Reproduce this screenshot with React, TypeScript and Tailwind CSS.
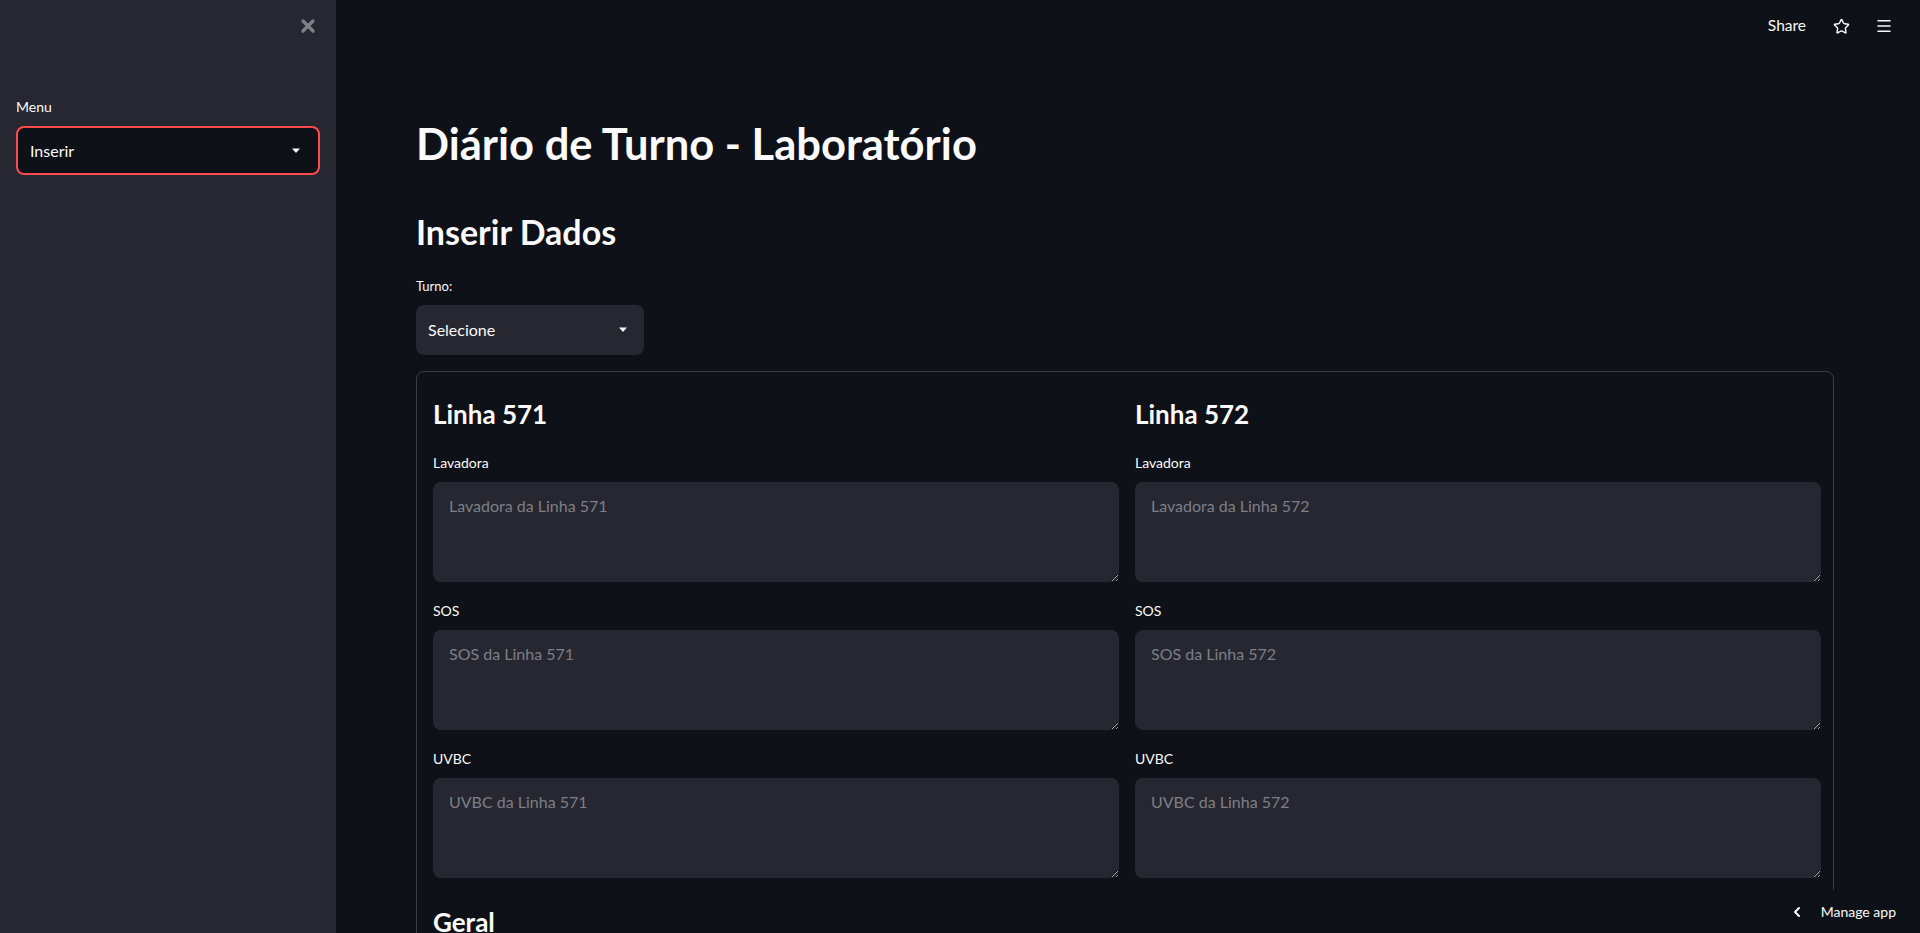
import React from 'react';
import { X, Star, Menu as MenuIcon, ChevronLeft } from 'lucide-react';

const font = { fontFamily: 'Lato, "Noto Sans", sans-serif' };

const Caret: React.FC = () => (
  <svg width="10" height="6" viewBox="0 0 10 6" className="shrink-0">
    <path d="M1 0.5h8L5 5z" fill="#fafafa" />
  </svg>
);

const Field: React.FC<{ label: string; placeholder: string; first?: boolean }> = ({ label, placeholder, first }) => (
  <div className={first ? '' : 'mt-4'}>
    <div className="h-6 flex items-center text-[14px] text-[#fafafa] mb-2">{label}</div>
    <textarea
      placeholder={placeholder}
      className="block w-full h-[100px] rounded-lg bg-[#262730] px-4 py-3 text-[16px] text-[#fafafa] placeholder:text-[#7d7f88] outline-none scheme-dark"
      style={font}
    />
  </div>
);

const LineColumn: React.FC<{ line: string }> = ({ line }) => (
  <div className="flex-1 min-w-0">
    <h3 className="text-[26px] leading-9 font-bold text-[#fafafa] mt-2 mb-[18px]">Linha {line}</h3>
    <Field first label="Lavadora" placeholder={`Lavadora da Linha ${line}`} />
    <Field label="SOS" placeholder={`SOS da Linha ${line}`} />
    <Field label="UVBC" placeholder={`UVBC da Linha ${line}`} />
  </div>
);

export default function App(): React.ReactNode {
  return (
    <div className="h-[933px] w-full overflow-hidden bg-[#0e1117] flex text-[#fafafa] relative" style={font}>
      {/* sidebar */}
      <aside className="w-[336px] shrink-0 h-full bg-[#262730] px-4">
        <div className="flex justify-end pt-[16px] pr-[2px]">
          <X className="w-[20px] h-[20px] text-[#7e8087]" strokeWidth={4} />
        </div>
        <div className="mt-[59px] text-[14px] leading-6 text-[#fafafa]">Menu</div>
        <div className="mt-[7px] h-[49px] w-[304px] rounded-lg border-2 border-[#ff4b4b] bg-[#0e1117] flex items-center justify-between pl-3 pr-[17px]">
          <span className="text-[16px]">Inserir</span>
          <Caret />
        </div>
      </aside>

      {/* main */}
      <main className="flex-1 min-w-0 pl-20 pr-[86px] relative">
        <header className="absolute top-0 right-0 h-[52px] flex items-center pr-[27px]">
          <span className="text-[15.5px] mr-[27px]">Share</span>
          <Star className="w-[17px] h-[17px] mr-[25px]" strokeWidth={2} />
          <MenuIcon className="w-[18px] h-[18px]" strokeWidth={2} />
        </header>

        <h1 className="pt-[117px] text-[43.5px] leading-[52px] font-bold">Diário de Turno - Laboratório</h1>
        <h2 className="mt-[43px] text-[34px] leading-10 font-bold">Inserir Dados</h2>
        <div className="mt-[24px] text-[13px] leading-5">Turno:</div>
        <div className="mt-[9px] h-[50px] w-[228px] rounded-lg bg-[#262730] flex items-center justify-between pl-3 pr-4">
          <span className="text-[16px]">Selecione</span>
          <Caret />
        </div>

        <section className="mt-[16px] rounded-lg border border-[#3b3d45] pl-4 pr-3 py-4">
          <div className="flex gap-4">
            <LineColumn line="571" />
            <LineColumn line="572" />
          </div>
          <h3 className="mt-[26px] text-[26px] leading-9 font-bold">Geral</h3>
          <div className="h-40" />
        </section>
      </main>

      {/* manage app */}
      <div className="absolute right-0 bottom-0 h-[43px] w-[140px] bg-[#0e1117] flex items-center justify-end pr-[24px] gap-[16px]">
        <ChevronLeft className="w-[16px] h-[16px]" strokeWidth={3} />
        <span className="text-[14px]">Manage app</span>
      </div>
    </div>
  );
}
